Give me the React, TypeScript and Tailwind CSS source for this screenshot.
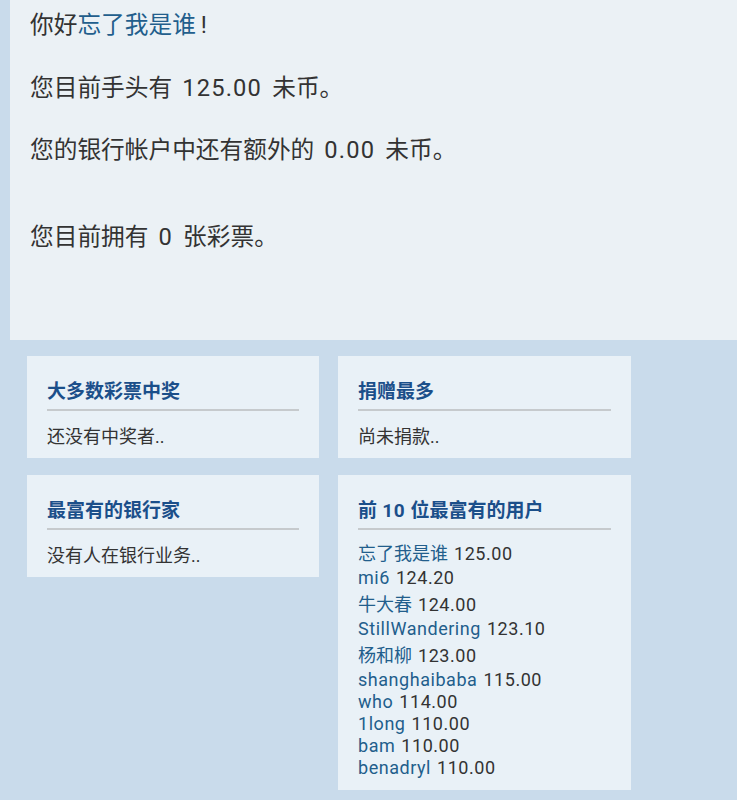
import React from 'react';

const font = { fontFamily: 'Roboto, "Noto Sans CJK SC", sans-serif' };

// Latin runs in the original render a little wider than Roboto, so they get a touch of tracking.
const Txt: React.FC<{ s: string; wide: string }> = ({ s, wide }) => (
  <>
    {s.split(/([\u3000-\u9fff\uff00-\uffef]+)/).map((part, i) =>
      /[\u3000-\u9fff\uff00-\uffef]/.test(part) || part === '' ? (
        <React.Fragment key={i}>{part}</React.Fragment>
      ) : (
        <span key={i} className={wide}>
          {part}
        </span>
      )
    )}
  </>
);

type Rich = { name: string; amount: string; cjk: boolean };

const richest: Rich[] = [
  { name: '忘了我是谁', amount: '125.00', cjk: true },
  { name: 'mi6', amount: '124.20', cjk: false },
  { name: '牛大春', amount: '124.00', cjk: true },
  { name: 'StillWandering', amount: '123.10', cjk: false },
  { name: '杨和柳', amount: '123.00', cjk: true },
  { name: 'shanghaibaba', amount: '115.00', cjk: false },
  { name: 'who', amount: '114.00', cjk: false },
  { name: '1long', amount: '110.00', cjk: false },
  { name: 'bam', amount: '110.00', cjk: false },
  { name: 'benadryl', amount: '110.00', cjk: false },
];

const Card: React.FC<{ title: string; children: React.ReactNode; bottom?: string }> = ({ title, children, bottom }) => (
  <div className={`bg-[#e9f1f7] px-5 pt-[22px] ${bottom ?? 'pb-[8px]'}`}>
    <h3 className="text-[19px] leading-[28px] font-bold text-[#1b4f8a] pb-[3px] border-b-2 border-[#c6cacd]">
      <Txt s={title} wide="tracking-[0.03em]" />
    </h3>
    {children}
  </div>
);

const App: React.FC = () => {
  const main = 'tracking-[0.05em] [word-spacing:3px]';
  const list = 'tracking-[0.03em] [word-spacing:1px]';
  return (
    <div className="min-h-[800px] bg-[#c9dbeb] text-[#333] overflow-hidden" style={font}>
      <div className="ml-[10px] bg-[#ebf1f5] pl-5 pt-[10px] pb-[88px] text-[23.7px] leading-[30px]">
        <p>
          你好<a className="text-[#225e8c]">忘了我是谁</a>
          <span className="ml-[5px]">!</span>
        </p>
        <p className="mt-[33px]">
          <Txt s="您目前手头有 125.00 未币。" wide={main} />
        </p>
        <p className="mt-[32px]">
          <Txt s="您的银行帐户中还有额外的 0.00 未币。" wide={main} />
        </p>
        <p className="mt-[57px]">
          <Txt s="您目前拥有 0 张彩票。" wide={main} />
        </p>
      </div>

      <div className="grid grid-cols-[292px_293px] gap-x-[19px] gap-y-[17px] items-start pl-[27px] pt-[16px]">
        <Card title="大多数彩票中奖">
          <p className="mt-[13px] text-[18px] leading-[26px]">还没有中奖者..</p>
        </Card>
        <Card title="捐赠最多">
          <p className="mt-[13px] text-[18px] leading-[26px]">尚未捐款..</p>
        </Card>
        <Card title="最富有的银行家">
          <p className="mt-[13px] text-[18px] leading-[26px]">没有人在银行业务..</p>
        </Card>
        <Card title="前 10 位最富有的用户" bottom="pb-[11px]">
          <div className="mt-[8px] text-[18px] leading-[22px]">
            {richest.map((r) => (
              <div key={r.name} className={r.cjk ? 'pt-[5px] pb-[2px]' : ''}>
                <a className="text-[#225e8c]">
                  <Txt s={r.name} wide={list} />
                </a>
                <span className={list}> {r.amount}</span>
              </div>
            ))}
          </div>
        </Card>
      </div>
    </div>
  );
};

export default App;
